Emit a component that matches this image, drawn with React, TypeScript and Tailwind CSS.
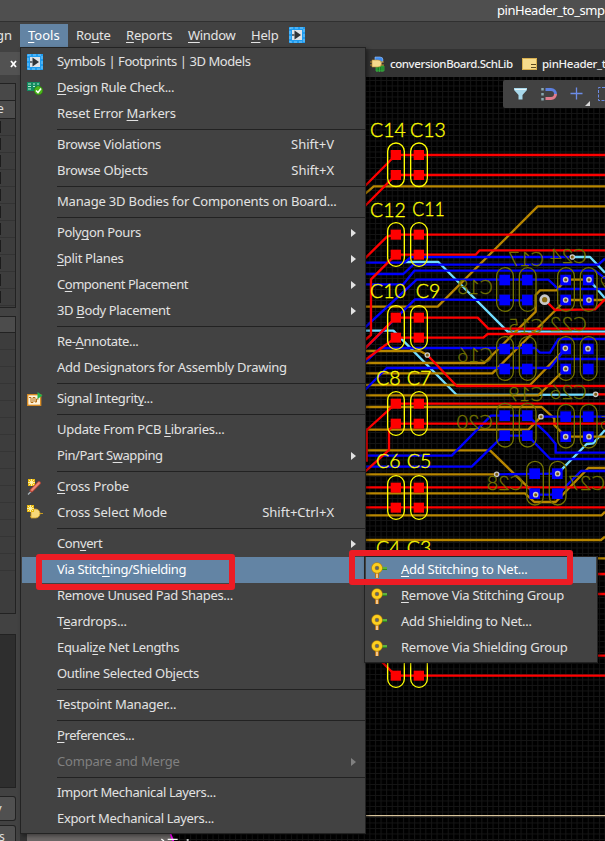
import React from "react";

type Item = {
  label: string;
  key?: string;
  arrow?: boolean;
  icon?: React.ReactNode;
  active?: boolean;
  disabled?: boolean;
  track?: string;
};

const FONT = "font-['Noto_Sans','Noto_Sans_CJK_SC',sans-serif]";

/* ---------- icons ---------- */
const PlayIcon = () => (
  <svg width="16" height="16" viewBox="0 0 16 16">
    <rect width="16" height="16" fill="#1f9cf0" />
    <rect x="1" y="1" width="14" height="14" fill="none" stroke="#7cc9fb" strokeDasharray="3 2" />
    <rect x="3" y="3" width="10" height="10" fill="#dfe3e8" />
    <path d="M5.500 3.500v9l6.500-4.500z" fill="#303438" />
    <rect x="3" y="7" width="3" height="2" fill="#6a6f74" />
  </svg>
);
const DrcIcon = () => (
  <svg width="16" height="16" viewBox="0 0 16 16">
    <rect x="0" y="2" width="13" height="9" fill="#128a60" />
    <path d="M1 4h3M1 6.500h3M1 9h3M6 4h2M6 6.500h2M10 4h2M10 6.500h2" stroke="#b9ecd2" />
    <circle cx="11.500" cy="10.500" r="4.300" fill="#4bb51c" stroke="#2a7a08" strokeWidth=".6" />
    <path d="M9 10.500l2 2 3-4" fill="none" stroke="#fff" strokeWidth="1.500" />
  </svg>
);
const SignalIcon = () => (
  <svg width="16" height="16" viewBox="0 0 16 16">
    <rect x=".7" y="3.700" width="13" height="10.600" fill="#fff3da" stroke="#d98a20" strokeWidth="1.300" />
    <path d="M2 6.500h2v5h2v-5h2v4.500h1.500V8h2" fill="none" stroke="#b06a12" />
    <path d="M10.500 1v7l5-3.500z" fill="#22b24c" />
  </svg>
);
const Spark = () => (
  <g>
    <rect x="1" y="0" width="7" height="7" fill="#e9b810" />
    <path d="M4.500 0v7M1 3.500h7M2 1l5 5M7 1L2 6" stroke="#fff6b0" strokeWidth=".9" />
  </g>
);
const ProbeIcon = () => (
  <svg width="16" height="16" viewBox="0 0 16 16">
    <Spark />
    <path d="M1 15.500l4-4" stroke="#a9b4bb" strokeWidth="1.300" />
    <path d="M4.500 11.500l7.500-7.500" stroke="#b8483a" strokeWidth="3.800" strokeLinecap="round" />
    <path d="M5 11l7-7" stroke="#f08a78" strokeWidth="1.800" strokeLinecap="round" />
  </svg>
);
const SelectIcon = () => (
  <svg width="16" height="16" viewBox="0 0 16 16">
    <path d="M3 11.500h3M12 8.500h4" stroke="#c79a20" strokeWidth="1.200" />
    <path d="M4 4h4.500a4.500 4.500 0 0 1 0 9H4z" fill="#f7d878" stroke="#d2a020" strokeWidth=".8" />
    <g transform="translate(-1 0)"><Spark /></g>
  </svg>
);
const ViaIcon = () => (
  <svg width="17" height="17" viewBox="0 0 17 17">
    <path d="M6 9v7" stroke="#b8741c" strokeWidth="4" />
    <path d="M6 9v7" stroke="#f4c68c" strokeWidth="2" />
    <path d="M10 6.500h6" stroke="#2f8a1c" strokeWidth="3" />
    <path d="M10 6h6" stroke="#8ad860" strokeWidth="1" />
    <circle cx="6" cy="6" r="3.700" fill="#5c6670" stroke="#b8860b" strokeWidth="4" />
    <circle cx="6" cy="6" r="3.700" fill="none" stroke="#fccf20" strokeWidth="2.800" />
  </svg>
);

/* ---------- menu data: "&" precedes the access key ---------- */
const GROUPS: Item[][] = [
  [
    { label: "Symbols | Footprints | 3D Models", icon: <PlayIcon />, track: "tracking-[-0.42px]" },
    { label: "&Design Rule Check...", icon: <DrcIcon />, track: "tracking-[-0.3px]" },
    { label: "Reset Error &Markers", track: "tracking-[-0.15px]" },
  ],
  [
    { label: "Browse Violations", key: "Shift+V", track: "tracking-[-0.25px]" },
    { label: "Browse Objects", key: "Shift+X", track: "tracking-[-0.25px]" },
  ],
  [{ label: "Manage 3D Bodies for Components on Board...", track: "tracking-[-0.18px]" }],
  [
    { label: "Poly&gon Pours", arrow: true, track: "tracking-[-0.35px]" },
    { label: "&Split Planes", arrow: true, track: "tracking-[-0.3px]" },
    { label: "C&omponent Placement", arrow: true, track: "tracking-[-0.47px]" },
    { label: "3D &Body Placement", arrow: true, track: "tracking-[-0.35px]" },
  ],
  [
    { label: "Re-&Annotate...", track: "tracking-[-0.35px]" },
    { label: "Add Designators for Assembly Drawing", track: "tracking-[-0.26px]" },
  ],
  [{ label: "Signal Integrit&y...", icon: <SignalIcon />, track: "tracking-[-0.38px]" }],
  [
    { label: "Update From PCB &Libraries...", track: "tracking-[-0.26px]" },
    { label: "Pin/Part S&wapping", arrow: true, track: "tracking-[-0.42px]" },
  ],
  [
    { label: "&Cross Probe", icon: <ProbeIcon />, track: "tracking-[-0.1px]" },
    { label: "Cross Select Mode", key: "Shift+Ctrl+X", icon: <SelectIcon />, track: "tracking-[-0.08px]" },
  ],
  [
    { label: "Con&vert", arrow: true, track: "tracking-[-0.4px]" },
    { label: "Via Stitc&hing/Shielding", active: true, track: "tracking-[-0.33px]" },
    { label: "Remove Unused Pad Shapes...", track: "tracking-[-0.3px]" },
    { label: "T&eardrops...", track: "tracking-[-0.15px]" },
    { label: "Equali&ze Net Lengths", track: "tracking-[-0.32px]" },
    { label: "Outline Selected Ob&jects", track: "tracking-[-0.3px]" },
  ],
  [{ label: "Testpoint Manager...", track: "tracking-[-0.2px]" }],
  [
    { label: "&Preferences...", track: "tracking-[-0.4px]" },
    { label: "Compare and Merge", arrow: true, disabled: true, track: "tracking-[-0.18px]" },
  ],
  [
    { label: "Import Mechanical Layers...", track: "tracking-[-0.35px]" },
    { label: "Export Mechanical Layers...", track: "tracking-[-0.33px]" },
  ],
];

const Label = ({ text }: { text: string }) => {
  const i = text.indexOf("&");
  if (i < 0) return <>{text}</>;
  return (
    <>
      {text.slice(0, i)}
      <span className="underline underline-offset-2 decoration-1 [text-decoration-skip-ink:none]">{text[i + 1]}</span>
      {text.slice(i + 2)}
    </>
  );
};

const Row = ({ item }: { item: Item }) => (
  <div
    className={`flex h-[26px] items-center pl-[5px] pr-[9px] ${
      item.active ? "bg-[#6384a4] text-white" : item.disabled ? "text-[#808080]" : "text-[#e2e2e2]"
    }`}
  >
    <span className="flex w-[30px] shrink-0">{item.icon}</span>
    <span className={`grow whitespace-pre ${item.track ?? ""}`}>
      <Label text={item.label} />
    </span>
    {item.key && <span className="mr-[22px]">{item.key}</span>}
    {item.arrow && (
      <svg width="5" height="8" viewBox="0 0 5 8">
        <path d="M0 0v8l5-4z" fill="currentColor" />
      </svg>
    )}
  </div>
);

/* ---------- board drawing, three units to a pixel ---------- */
const GOLD = [
  "0,252 26,229 720,229",
  "720,289 518,289 218,590 0,590",
  "0,723 165,723 187,735",
  "0,759 358,759 512,605 512,555 525,541 575,541 602,509 672,509",
  "602,570 720,570",
  "0,790 382,790 602,570",
  "0,825 495,825 602,715",
  "0,891 530,891 568,925 568,945 602,980 720,980",
  "0,959 490,959 528,920",
  "0,1021 375,1021 512,1154",
  "0,1093 395,1093",
  "0,1150 480,1150 508,1176 572,1176 670,1074 720,1074",
  "0,1216 710,1216 720,1205",
  "0,1290 708,1290 720,1280",
  "600,1345 720,1345",
];
const BLUE = [
  "0,458 118,458 138,441 612,441",
  "0,492 115,492 145,464 700,464 720,446",
  "0,523 115,523 148,482 690,482 720,505",
  "0,652 155,509 550,509 580,537 720,537",
  "0,715 150,568 480,571",
  "0,758 45,714 510,714 525,728 555,728 580,687 720,687",
  "0,840 65,774 555,774 602,715",
  "580,747 720,747",
  "0,1037 260,1037 378,917 488,917 545,970 572,1002 572,1028 720,1028",
  "0,1070 320,1070 415,977 488,977 556,1047 720,1047",
  "528,920 720,920",
  "395,1093 578,1091",
  "512,1154 578,1154 648,1083 720,1083",
];
const CYAN = [
  "120,456 220,456 428,665 720,665",
  "0,662 85,662 275,855 690,854",
  "622,441 675,441 720,488",
  "672,509 720,565",
  "578,1091 665,1002 685,1000 720,960",
];
const RED = [
  "0,228 92,135 720,135",
  "0,288 92,195 720,195",
  "0,445 66,380 92,374 720,374",
  "0,690 18,675 18,508 92,434 332,434 344,421 720,421",
  "0,715 92,623 338,623 370,656 720,656",
  "0,750 92,683 355,683 368,672 720,672",
  "187,735 275,828 720,828",
  "539,569 570,600 690,598 720,568",
  "5,1055 5,960 92,881 720,881",
  "0,1085 72,1020 72,960 92,941 720,941",
  "692,853 720,853",
  "0,1132 720,1132",
  "0,1192 720,1192",
  "600,1392 720,1392",
  "600,1452 720,1452",
  "600,1637 720,1637",
  "45,1650 92,1697 720,1697",
];
const TOP_CAPS = [98, 337, 586, 844, 1096, 1600];
const BOTTOM_CAPS = [
  [395, 473], [463, 473], [578, 473], [646, 473],
  [395, 680], [463, 680], [578, 680], [646, 680],
  [395, 880], [463, 880], [578, 883], [646, 883],
  [485, 1054], [553, 1054],
];
const VIAS = [
  [622, 441], [602, 509], [672, 509], [602, 570], [672, 570], [601, 715], [669, 716], [602, 776],
  [187, 735], [692, 853], [528, 920], [602, 980], [672, 980], [395, 1093], [578, 1091], [512, 1154],
];
const TOP_TEXT: [string, number, number, number][] = [
  ["C14", 15, 82, 107], ["C13", 135, 80, 107], ["C12", 15, 320, 107], ["C11", 142, 318, 97],
  ["C10", 15, 565, 107], ["C9", 152, 563, 74], ["C8", 33, 825, 74], ["C7", 125, 825, 74],
  ["C6", 33, 1075, 74], ["C5", 125, 1075, 74], ["C4", 33, 1336, 74], ["C3", 125, 1336, 74],
];
const BOTTOM_TEXT: [string, number, number, number][] = [
  ["C17", 430, 467, 106], ["C24", 555, 458, 110], ["C18", 277, 553, 106], ["C15", 430, 670, 106],
  ["C22", 555, 663, 110], ["C16", 277, 755, 106], ["C19", 430, 872, 106], ["C26", 555, 868, 110],
  ["C20", 275, 958, 108], ["C28", 365, 1140, 110], ["C27", 610, 1140, 110],
];

const Traces = ({ list, color }: { list: string[]; color: string }) => (
  <g fill="none" stroke={color} strokeWidth="7" strokeLinejoin="round">
    {list.map((p, i) => (
      <polyline key={i} points={p} />
    ))}
  </g>
);

const Board = () => (
  <svg className="block shrink-0" width="578" height="764" viewBox="-1014 -99 1734 2292">
    <defs>
      <pattern id="grid" width="16.800" height="16.500" patternUnits="userSpaceOnUse" x="13" y="-90">
        <path d="M0 1.500H17M1.500 0V17" stroke="#151515" strokeWidth="3" />
      </pattern>
    </defs>
    <rect x="-1014" y="-99" width="1734" height="2292" fill="#000" />
    <rect x="-1014" y="-99" width="1734" height="2292" fill="url(#grid)" />
    <Traces list={CYAN} color="#70dcff" />
    <Traces list={GOLD} color="#b88600" />
    <polyline points="0,856 520,856 602,776" fill="none" stroke="#b88600" strokeWidth="7" />
    <Traces list={BLUE} color="#0000ff" />
    <Traces list={RED} color="#ff0000" />
    {BOTTOM_CAPS.map(([x, y]) => (
      <g key={`${x}-${y}`}>
        <rect x={x + 8} y={y + 21} width="32" height="32" fill="#0000ff" />
        <rect x={x + 8} y={y + 81} width="32" height="32" fill="#0000ff" />
        <rect x={x} y={y} width="50" height="131" rx="25" fill="none" stroke="#747400" strokeWidth="4" />
      </g>
    ))}
    {TOP_CAPS.map((y) =>
      [67, 136].map((x) => (
        <g key={`${x}-${y}`}>
          <rect x={x + 10} y={y + 22} width="31" height="30" fill="#ff0000" />
          <rect x={x + 10} y={y + 82} width="31" height="30" fill="#ff0000" />
          <rect x={x + 1} y={y + 1} width="50" height="131" rx="25" fill="none" stroke="#ffff00" strokeWidth="4" />
        </g>
      ))
    )}
    {VIAS.map(([x, y]) => (
      <circle key={`${x}-${y}`} cx={x} cy={y} r="6.500" fill="#7a5c10" stroke="#c8c8c8" strokeWidth="4" />
    ))}
    <circle cx="539" cy="569" r="12" fill="#8a6a10" stroke="#c8c8c8" strokeWidth="8" />
    <g fontFamily="Lato, sans-serif" fontWeight="300" fontSize="61" strokeWidth="1">
      {TOP_TEXT.map(([t, x, y, w]) => (
        <text key={t} x={x} y={y} textLength={w} lengthAdjust="spacingAndGlyphs" fill="#ffff00" stroke="#ffff00">
          {t}
        </text>
      ))}
      {BOTTOM_TEXT.map(([t, x, y, w]) => (
        <text
          key={t}
          transform={`translate(${x + w} ${y}) scale(-1 1)`}
          textLength={w}
          lengthAdjust="spacingAndGlyphs"
          fill="#747400"
          stroke="#747400"
        >
          {t}
        </text>
      ))}
      <text transform="translate(738 540) scale(-1 1)" fill="#747400">9</text>
      <text transform="translate(738 960) scale(-1 1)" fill="#747400">5</text>
    </g>
    <path d="M-1014 2117H720" stroke="#d8c49c" strokeWidth="4" />
    <path d="M-1014 2160H-588L-575 2193H-1014z" fill="#6b6766" />
    <path d="M-588 2160L-575 2193" stroke="#ff00ff" strokeWidth="5" />
    <path d="M-611 2187l8 6M-592 2188h30M-535 2190h6" stroke="#fff" strokeWidth="4" />
  </svg>
);

/* ---------- left docked panel ---------- */
const Panel = () => (
  <div className="flex w-5 shrink-0 flex-col overflow-hidden bg-[#424242] pr-1 text-[13px] text-[#e0e0e0] *:shrink-0">
    <div className="-mr-1 mt-[3px] flex h-[23px] items-center justify-end bg-[#525252] pr-[3px]">
      <svg width="7" height="8" viewBox="0 0 7 8">
        <path d="M1 1l5 6M6 1L1 7" stroke="#fff" strokeWidth="1.800" />
      </svg>
    </div>
    <div className="mt-2 h-[18px] border-y border-r border-[#222] bg-[#484848]" />
    <div className="h-[18px] border-b border-r border-[#222] bg-[#4c4c4c] text-[12px] leading-[16px]">
      <span className="-ml-[3px]">e</span>
    </div>
    <div className="h-[189px] overflow-hidden border-b border-r border-[#222] bg-[#3d3d3d]">
      {Array.from({ length: 11 }, (_, i) => (
        <div key={i} className="flex h-[17px] items-center border-b border-[#333]">
          <div className="h-3 w-px bg-[#1c1c1c]" />
        </div>
      ))}
    </div>
    <div className="mt-2 h-[17px] border-y border-r border-[#222] bg-[#4c4c4c]" />
    <div className="h-[281px] border-b border-r border-[#222] bg-[#3d3d3d]">
      {Array.from({ length: 14 }, (_, i) => (
        <div key={i} className="h-[17px] border-b border-[#353535]" />
      ))}
    </div>
    <div className="mt-5 h-[154px] border-y border-r border-[#222] bg-[#2e2e2e]" />
    <div className="mt-2 h-[25px] rounded-r-[3px] border-y border-r border-[#222] bg-[#505050] leading-[22px]">
      <span className="-ml-[5px]">y</span>
    </div>
    <div className="mt-1 h-[25px] rounded-r-[3px] border-y border-r border-[#222] bg-[#505050] text-[12px] leading-[22px]">
      <span className="-ml-px">s</span>
    </div>
  </div>
);

const SUB: [string, string][] = [
  ["&Add Stitching to Net...", "tracking-[-0.28px]"],
  ["&Remove Via Stitching Group", "tracking-[-0.26px]"],
  ["Add Shielding to Net...", "tracking-[-0.22px]"],
  ["Remove Via Shielding Group", "tracking-[-0.24px]"],
];

export default function App() {
  return (
    <div className={`relative flex h-[841px] w-[605px] flex-col overflow-hidden bg-[#424242] text-[13px] ${FONT}`}>
      <div className="flex h-[22px] shrink-0 items-center border-b border-[#303030] bg-[#4f4f4f] pl-[497px] text-white">
        <span className="whitespace-nowrap tracking-[-0.45px]">pinHeader_to_smp</span>
      </div>
      <div className="flex h-[27px] shrink-0 items-start pt-[2px] leading-[23px] text-[#e4e4e4]">
        <span className="flex w-5 justify-end overflow-hidden pr-2">gn</span>
        <span className="w-12 bg-[#6384a4] pl-2 text-white"><Label text="&Tools" /></span>
        <span className="w-[50px] pl-2 tracking-[-0.3px]"><Label text="Ro&ute" /></span>
        <span className="w-[62px] pl-2 tracking-[-0.2px]"><Label text="&Reports" /></span>
        <span className="w-[63px] pl-2 tracking-[-0.3px]"><Label text="&Window" /></span>
        <span className="w-[46px] pl-2 tracking-[-0.2px]"><Label text="&Help" /></span>
        <span className="pt-[3px]"><PlayIcon /></span>
      </div>
      <div className="flex min-h-0 grow">
        <Panel />
        <div className="flex grow flex-col bg-[#333] pl-[7px]">
          <div className="flex h-7 shrink-0 items-center pl-[343px] pt-[2px] text-[12px] font-medium text-[#f0f0f0]">
            <svg width="15" height="16" viewBox="0 0 15 16" className="shrink-0">
              <path d="M6 10h8v5H6zM7 9v7M9.500 9v7M12 9v7" fill="#1d7a26" stroke="#38b040" strokeWidth=".8" />
              <path d="M5 1h5a3 3 0 0 1 0 6H5z" fill="#3f8cf0" stroke="#9cc8ff" strokeWidth=".6" />
              <path d="M0 6h14M0 9h14" stroke="#c08a28" />
              <path d="M2 4h6a3.500 3.500 0 0 1 0 7H2z" fill="#f6d98c" stroke="#b88a30" strokeWidth=".6" />
            </svg>
            <span className="ml-[5px] w-[122px] shrink-0 whitespace-nowrap text-[11.5px] tracking-[-0.42px]">conversionBoard.SchLib</span>
            <svg width="16" height="12" viewBox="0 0 16 12" className="ml-[10px] shrink-0">
              <rect x=".5" y=".5" width="14" height="11" fill="#f7dc8c" stroke="#d8b050" />
              <path d="M9 6.500h5M9 9.500h5" stroke="#5c4a20" />
            </svg>
            <span className="ml-[4px] whitespace-nowrap text-[11.5px] tracking-[-0.3px]">pinHeader_t</span>
          </div>
          <Board />
        </div>
      </div>

      {/* floating toolbar */}
      <div className="absolute left-[503px] top-[80px] flex h-7 w-[102px] items-center overflow-hidden rounded-l-[2px] bg-[#424242]">
        <svg width="102" height="28" viewBox="0 0 102 28">
          <path d="M11 8h13v2l-4.500 5v4.500h-4V15L11 10z" fill="#a8d8ea" />
          <path d="M12 9.500h11" stroke="#e4f6fc" />
          <path d="M39.500 8v2.500M39.500 13v2.500M39.500 18v2.500" stroke="#8aa8b0" strokeWidth="2.500" />
          <path d="M42.500 9.500h5.500a4.500 4.500 0 0 1 4.500 4.500" fill="none" stroke="#5c80e0" strokeWidth="3" />
          <path d="M42.500 18.500h5.500a4.500 4.500 0 0 0 4.500-4.500" fill="none" stroke="#e07c8c" strokeWidth="3" />
          <path d="M67.500 13.500h12M73.500 7.500v12" stroke="#6c8ce8" strokeWidth="1.300" />
          <path d="M87 21v5h-5z" fill="#d8d8d8" />
          <path d="M102 7.500h-6.500v13h6.500" fill="none" stroke="#6c8ce8" strokeDasharray="3 1.500" />
        </svg>
      </div>

      {/* Tools drop-down */}
      <div className="absolute left-5 top-[47px] h-[787px] w-[346px] border border-[#232323] bg-[#424242] pl-px pt-px shadow-[2px_2px_4px_rgba(0,0,0,0.4)]">
        {GROUPS.map((g, i) => (
          <div key={i}>
            {i > 0 && (
              <div className="flex h-[5px] items-center pl-[35px]">
                <div className="h-px grow bg-[#222]" />
              </div>
            )}
            {g.map((it) => (
              <Row key={it.label} item={it} />
            ))}
          </div>
        ))}
      </div>

      {/* submenu */}
      <div className="absolute left-[364px] top-[556px] h-[107px] w-[234px] border border-[#232323] bg-[#424242] pl-px text-[#e2e2e2] shadow-[2px_2px_4px_rgba(0,0,0,0.4)]">
        {SUB.map(([s, track], i) => (
          <div key={s} className={`mr-px flex h-[26px] items-center pl-[5px] ${i === 0 ? "bg-[#6384a4] text-white" : ""}`}>
            <span className="w-[30px]"><ViaIcon /></span>
            <span className={`whitespace-nowrap ${track}`}><Label text={s} /></span>
          </div>
        ))}
      </div>

      {/* highlight frames */}
      <div className="absolute left-[36px] top-[554px] h-9 w-[199px] rounded-[3px] border-[6px] border-[#ed1c24]" />
      <div className="absolute left-[349px] top-[550px] h-[35px] w-[224px] rounded-[3px] border-[6px] border-[#ed1c24]" />
    </div>
  );
}
